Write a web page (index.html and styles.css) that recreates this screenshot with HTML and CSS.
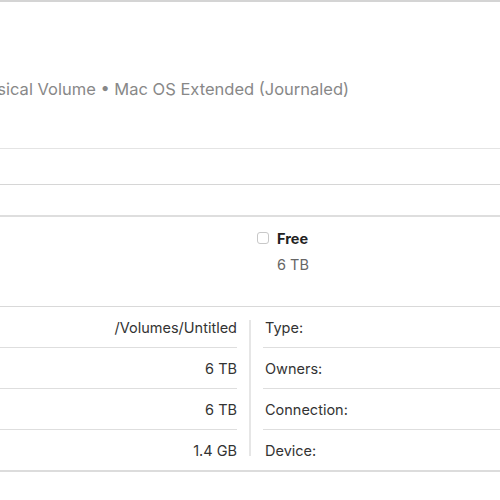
FILE: index.html
```
<!DOCTYPE html>
<html>
<head>
<meta charset="utf-8">
<link rel="stylesheet" href="styles.css">
</head>
<body>
<div class="window">
  <header class="header">
    <div class="subtitle">Physical Volume • Mac OS Extended (Journaled)</div>
  </header>
  <div class="bar bar-a"></div>
  <div class="bar bar-b"></div>
  <section class="usage">
    <div class="legend">
      <span class="swatch"></span>
      <div class="legend-text">
        <div class="legend-title">Free</div>
        <div class="legend-value">6 TB</div>
      </div>
    </div>
  </section>
  <section class="info">
    <div class="col col-left">
      <div class="row"><span class="value">/Volumes/Untitled</span></div>
      <div class="row"><span class="value">6 TB</span></div>
      <div class="row"><span class="value">6 TB</span></div>
      <div class="row"><span class="value">1.4 GB</span></div>
    </div>
    <div class="divider"></div>
    <div class="col col-right">
      <div class="row"><span class="label">Type:</span></div>
      <div class="row"><span class="label">Owners:</span></div>
      <div class="row"><span class="label">Connection:</span></div>
      <div class="row"><span class="label">Device:</span></div>
    </div>
  </section>
</div>
</body>
</html>
```
FILE: styles.css
```
html, body {
  margin: 0;
  padding: 0;
  background: #ffffff;
}
body {
  font-family: "Inter", "Liberation Sans", sans-serif;
  color: #333;
  overflow: hidden;
}
.window {
  width: 500px;
  border-top: 2px solid #d4d4d4;
}
.header {
  height: 146px;
  display: flex;
  align-items: center;
  overflow: hidden;
}
.subtitle {
  margin-left: -32px;
  margin-top: 27px;
  font-size: 16.5px;
  color: #888;
  white-space: nowrap;
}
.bar {
  border-top: 1px solid #e4e4e4;
}
.bar-a {
  height: 35px;
}
.bar-b {
  height: 30px;
  border-top-color: #d6d6d6;
}
.usage {
  border-top: 2px solid #dedede;
  height: 89px;
  display: flex;
  justify-content: flex-start;
}
.legend {
  margin-left: 257px;
  margin-top: 13px;
  display: flex;
  gap: 8px;
}
.swatch {
  width: 10px;
  height: 10px;
  border: 1px solid #c8c8c8;
  border-radius: 3px;
  margin-top: 2px;
  flex: none;
}
.legend-title {
  font-size: 14.5px;
  font-weight: 700;
  color: #222;
}
.legend-value {
  margin-top: 9px;
  font-size: 14.5px;
  color: #666;
}
.info {
  border-top: 1px solid #d9d9d9;
  border-bottom: 2px solid #dcdcdc;
  display: grid;
  grid-template-columns: 237px 26px 1fr;
}
.col .row {
  height: 40px;
  display: flex;
  align-items: center;
  font-size: 14.5px;
  border-bottom: 1px solid #dedede;
}
.col .row:last-child {
  border-bottom: none;
}
.col-left .row {
  justify-content: flex-end;
}
.col-right .row {
  padding-left: 2px;
}
.divider {
  justify-self: center;
  width: 2px;
  margin: 13px 0 14px;
  background: #e6e6e6;
}
.value, .label {
  color: #333;
}
```
